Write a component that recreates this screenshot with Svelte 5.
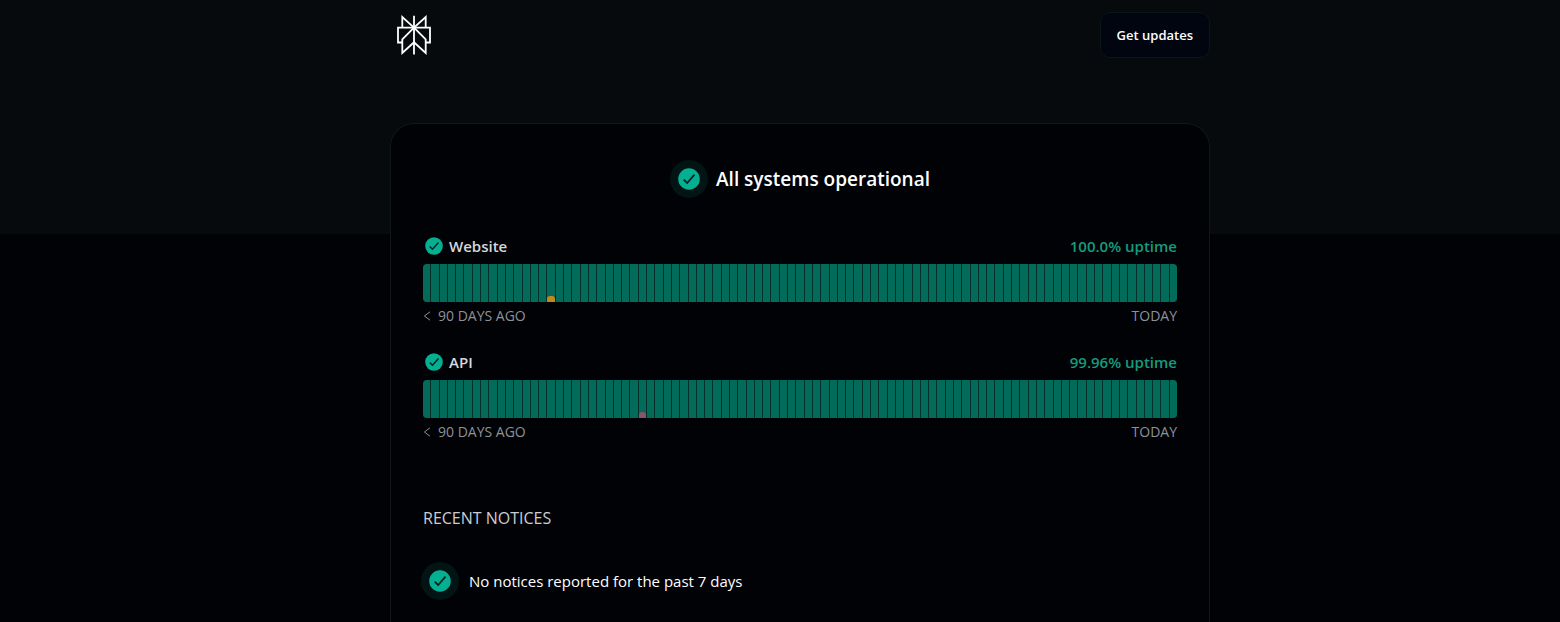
<script lang="ts">
  type Incident = { day: number; level: 'minor' | 'major' };

  type Component = {
    name: string;
    uptime: string;
    incident: Incident;
  };

  const DAYS = 91;

  const components: Component[] = [
    { name: 'Website', uptime: '100.0%', incident: { day: 15, level: 'minor' } },
    { name: 'API', uptime: '99.96%', incident: { day: 26, level: 'major' } },
  ];

  const days = Array.from({ length: DAYS }, (_, i) => i);
</script>

{#snippet check()}
  <svg class="check" viewBox="0 0 20 20" aria-hidden="true">
    <circle cx="10" cy="10" r="9.8" fill="#05b092" />
    <path d="M5.2 10.6 8.3 13.6 15 6" fill="none" stroke="#03231e" stroke-width="1.6" />
  </svg>
{/snippet}

<div class="page">
  <header class="header">
    <a class="logo" href="/" aria-label="Home">
      <svg viewBox="0 0 36 40" fill="none" stroke="#fff" stroke-width="1.8">
        <path d="M18 .7V39.5" />
        <path d="M18 12.7 6.3 2V12.7M18 12.7 29.7 2V12.7" />
        <path d="M6.3 27.5H2V12.7H34V27.5H29.7" />
        <path d="M18 12.7 6.3 24.3V38L18 27.3 29.7 38V24.3L18 12.7" />
      </svg>
    </a>
    <button class="updates" type="button">Get updates</button>
  </header>

  <main class="card">
    <div class="summary">
      <span class="halo">{@render check()}</span>
      <h1>All systems operational</h1>
    </div>

    {#each components as component (component.name)}
      <section class="component">
        <div class="component-head">
          <span class="small-icon">{@render check()}</span>
          <h2>{component.name}</h2>
          <span class="uptime">{component.uptime} uptime</span>
        </div>
        <div class="bars">
          {#each days as day (day)}
            <span class="bar">
              {#if component.incident.day === day}
                <span class="mark {component.incident.level}"></span>
              {/if}
            </span>
          {/each}
        </div>
        <div class="range">
          <span class="from">
            <svg viewBox="0 0 8 10" aria-hidden="true">
              <path d="M7 .8 1.4 5 7 9.2" fill="none" stroke="currentColor" />
            </svg>
            90 DAYS AGO
          </span>
          <span>TODAY</span>
        </div>
      </section>
    {/each}

    <section class="notices">
      <h2>RECENT NOTICES</h2>
      <div class="notice">
        <span class="halo">{@render check()}</span>
        <p>No notices reported for the past 7 days</p>
      </div>
    </section>
  </main>
</div>

<style>
  :global(body) {
    background: #010206;
  }

  .page {
    box-sizing: border-box;
    min-height: 100vh;
    padding: 12px 16px 0 56px;
    background: linear-gradient(#060a0d, #060a0d) no-repeat;
    background-size: 100% 234px;
    color: #fff;
    font-family: 'Segoe UI', 'Open Sans', 'Noto Sans', sans-serif;
    display: flex;
    flex-direction: column;
  }

  h1,
  h2,
  p {
    margin: 0;
  }

  .header,
  .card {
    box-sizing: border-box;
    width: 100%;
    max-width: 820px;
    margin: 0 auto;
  }

  .header {
    display: flex;
    justify-content: space-between;
    align-items: center;
    padding-left: 6px;
  }

  .logo svg {
    display: block;
    width: 36px;
    height: 40px;
  }

  .updates {
    height: 46px;
    padding: 0 16px;
    border: 1px solid #0d141d;
    border-radius: 10px;
    background: #01050f;
    color: #fff;
    font-family: inherit;
    font-size: 13px;
    font-weight: 600;
    cursor: pointer;
  }

  .card {
    flex: 1;
    margin-top: 65px;
    padding: 36px 32px 20px;
    border: 1px solid #101619;
    border-bottom: 0;
    border-radius: 24px 24px 0 0;
    background: #010206;
  }

  .summary {
    display: flex;
    justify-content: center;
    align-items: center;
    gap: 8px;
    margin-bottom: 36px;
  }

  .summary h1 {
    font-size: 19px;
    line-height: 38px;
    font-weight: 600;
  }

  .check {
    display: block;
    width: 100%;
    height: 100%;
  }

  .halo {
    box-sizing: border-box;
    flex-shrink: 0;
    width: 38px;
    height: 38px;
    padding: 8px;
    border-radius: 50%;
    background: #021413;
  }

  .component {
    margin-bottom: 24px;
  }

  .component-head {
    display: flex;
    align-items: center;
    gap: 6px;
    height: 24px;
    padding-left: 2px;
    margin-bottom: 6px;
  }

  .small-icon {
    width: 18px;
    height: 18px;
  }

  .component h2 {
    font-size: 15px;
    font-weight: 600;
    color: #d5d7da;
  }

  .uptime {
    margin-left: auto;
    font-size: 15px;
    font-weight: 600;
    color: #159c7c;
  }

  .bars {
    display: flex;
    gap: 1px;
    height: 38px;
    border-radius: 4px;
    background: #022d29;
    overflow: hidden;
  }

  .bar {
    flex: 1;
    display: flex;
    align-items: flex-end;
    background: #036b59;
  }

  .mark {
    width: 100%;
    height: 6px;
    border-radius: 3px 3px 0 0;
  }

  .mark.minor {
    background: #c58719;
  }

  .mark.major {
    background: #875567;
  }

  .range {
    display: flex;
    justify-content: space-between;
    margin-top: 4px;
    font-size: 14px;
    line-height: 20px;
    color: #8f9198;
  }

  .from {
    display: flex;
    align-items: center;
    gap: 7px;
  }

  .from svg {
    width: 8px;
    height: 10px;
  }

  .notices {
    margin-top: 64px;
  }

  .notices h2 {
    font-size: 16px;
    line-height: 24px;
    font-weight: 400;
    color: #cbcdd1;
  }

  .notice {
    display: flex;
    align-items: center;
    gap: 10px;
    margin: 32px 0 0 -2px;
  }

  .notice p {
    font-size: 15px;
    line-height: 24px;
  }
</style>
